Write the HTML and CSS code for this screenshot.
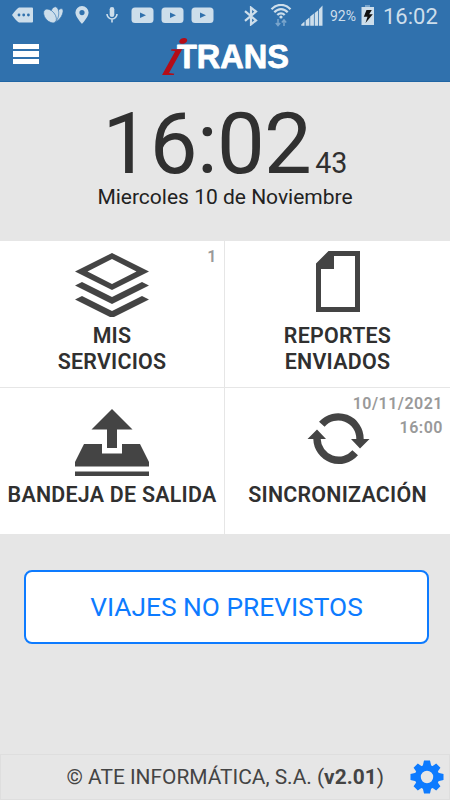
FILE: index.html
```html
<!DOCTYPE html>
<html lang="es">
<head>
    <meta charset="UTF-8">
    <meta name="viewport" content="width=device-width, initial-scale=1.0">
    <title>iTrans</title>
    <link rel="stylesheet" href="styles.css">
</head>
<body>
    <header class="top">
        <!-- Status bar -->
        <div class="status">
            <div class="status-left">
                <svg width="22" height="18" viewBox="0 0 22 18"><path d="M7 1.5H20a1 1 0 0 1 1 1V15.5a1 1 0 0 1-1 1H7Q5 16 0 9Q5 2 7 1.5Z"/><g class="hole"><circle cx="7" cy="9" r="1.4"/><circle cx="11.7" cy="9" r="1.4"/><circle cx="16.4" cy="9" r="1.4"/></g></svg>
                <svg width="22" height="18" viewBox="0 0 22 18"><ellipse class="leaf" cx="15.5" cy="9" rx="3.2" ry="7.2" transform="rotate(31 15.5 9)"/><ellipse class="leaf" cx="11.5" cy="8.5" rx="4.2" ry="7.8" transform="rotate(8 11.5 8.5)"/><ellipse class="leaf" cx="7" cy="10" rx="5" ry="8" transform="rotate(-40 7 10)"/></svg>
                <svg width="14" height="18" viewBox="0 0 14 18"><path fill-rule="evenodd" d="M7 0a6.6 6.6 0 0 1 6.6 6.6C13.6 11 7 18 7 18S.4 11 .4 6.6A6.6 6.6 0 0 1 7 0ZM7 4a2.6 2.6 0 1 0 0 5.2A2.6 2.6 0 0 0 7 4Z"/></svg>
                <svg width="12" height="18" viewBox="0 0 12 18"><rect x="3.7" y="1" width="4.6" height="10" rx="2.3"/><path class="line thin" d="M1 8a5 5 0 0 0 10 0M6 13v3.5"/></svg>
                <svg width="23" height="18" viewBox="0 0 23 18"><rect x=".5" y="1.5" width="22" height="15.5" rx="3.5"/><path class="hole" d="M9 6.4l6 2.8-6 2.8z"/></svg>
                <svg width="23" height="18" viewBox="0 0 23 18"><rect x=".5" y="1.5" width="22" height="15.5" rx="3.5"/><path class="hole" d="M9 6.4l6 2.8-6 2.8z"/></svg>
                <svg width="23" height="18" viewBox="0 0 23 18"><rect x=".5" y="1.5" width="22" height="15.5" rx="3.5"/><path class="hole" d="M9 6.4l6 2.8-6 2.8z"/></svg>
            </div>
            <div class="status-right">
                <svg class="bluetooth" width="14" height="20" viewBox="0 0 14 20"><path class="line" d="M1 5.2l11 9.2-5 4V1.6l5 4-11 9.2"/></svg>
                <svg class="wifi" width="22" height="23" viewBox="0 0 22 23"><path class="line" d="M1.5 5.3C7-.6 15-.6 20.5 5.3M4.3 8.3c4-4.3 9.4-4.3 13.4 0M7.3 11.1c2.2-2.3 5.2-2.3 7.4 0"/><circle cx="11" cy="13" r="1.6"/><path class="arrows" d="M8 15v6M5.8 19L8 21.5l2.2-2.5M14 22v-6M11.8 18.5L14 16l2.2 2.5"/></svg>
                <svg class="signal" width="22" height="21" viewBox="0 0 22 21"><path d="M.2 20.7V19.5L3.5 16.5v4.2zM4.7 15.5l3.7-3v8.2H4.7zM9.2 11.5l3.7-3v12.2H9.2zM13.7 8l3.5-2.8v15.5h-3.5zM18 4.2l3.5-3.6v20.1H18z"/></svg>
                <span class="percent">92%</span>
                <svg class="battery" width="14" height="20" viewBox="0 0 14 20"><path class="cap" d="M4 0h5v2H4z"/><rect x=".5" y="2" width="12.5" height="18"/><path class="bolt" d="M5.5 5h5.3L8.2 9.3h3.6L4.5 18l2-6.2H2.8z"/></svg>
                <span class="status-time">16:02</span>
            </div>
        </div>
        <!-- App bar -->
        <div class="app-bar">
            <div class="menu">
                <span></span>
                <span></span>
                <span></span>
            </div>
            <svg class="logo" width="132" height="44" viewBox="0 0 132 44">
                <text class="logo-i" transform="translate(-3 38.5) skewX(-18) scale(1.3 1)" x="0" y="0">i</text>
                <text class="logo-name" x="16" y="32" textLength="112" lengthAdjust="spacingAndGlyphs">TRANS</text>
            </svg>
        </div>
    </header>

    <section class="clock">
        <div class="time">16:02<span class="seconds">43</span></div>
        <div class="date">Miercoles 10 de Noviembre</div>
    </section>

    <main class="tiles">
        <div class="tile">
            <div class="badge">1</div>
            <svg class="icon" width="74" height="76" viewBox="0 0 74 76">
                <path fill-rule="evenodd" d="M37 12L74 30.5 37 49 0 30.5zM37 18L12.5 30.5 37 43 61.5 30.5z"/>
                <path d="M0 44.5l7-3.5L37 56l30-15 7 3.5L37 63zM0 58.5l7-3.5L37 70l30-15 7 3.5L37 77z"/>
            </svg>
            <div class="label">MIS<br>SERVICIOS</div>
        </div>
        <div class="tile">
            <svg class="icon" width="74" height="76" viewBox="0 0 74 76">
                <path fill-rule="evenodd" d="M27.5 10H59V71H15V22.5zM54 15H33V28H20V66H54z"/>
            </svg>
            <div class="label">REPORTES<br>ENVIADOS</div>
        </div>
        <div class="tile">
            <svg class="icon" width="74" height="88" viewBox="0 0 74 88">
                <path d="M37 21L57.5 41.5H42V60H32V41.5H16.5zM9 56H27v9.5H47V56H65l9 18v4.5H0V74zM0 83.5H74V88H0z"/>
            </svg>
            <div class="label">BANDEJA DE SALIDA</div>
        </div>
        <div class="tile">
            <div class="badge">10/11/2021<br>16:00</div>
            <svg class="icon" width="74" height="88" viewBox="0 0 74 88">
                <path class="arc" d="M20.8 36.3A21.8 21.8 0 0 1 59 51M54.2 64.8A21.8 21.8 0 0 1 16 51"/>
                <path d="M50 51H68.5L59 60.5zM6.5 51H25L16 41.5z"/>
            </svg>
            <div class="label">SINCRONIZACIÓN</div>
        </div>
    </main>

    <button class="trips">VIAJES NO PREVISTOS</button>

    <footer class="footer">
        <span class="copy">© ATE INFORMÁTICA, S.A. (<b>v2.01</b>)</span>
        <svg class="gear" width="34" height="34" viewBox="-17 -17 34 34">
            <circle class="ring" r="9.2"/>
            <path d="M-4.5-10L-3-16.5H3L4.5-10zM-4.5 10L-3 16.5H3L4.5 10zM-10-4.5L-16.5-3V3L-10 4.5zM10-4.5L16.5-3V3L10 4.5z"/>
            <path transform="rotate(45)" d="M-4-10L-3-16H3L4-10zM-4 10L-3 16H3L4 10zM-10-4L-16-3V3L-10 4zM10-4L16-3V3L10 4z"/>
        </svg>
    </footer>
</body>
</html>
```
FILE: styles.css
```css
* {
    box-sizing: border-box;
    margin: 0;
    padding: 0;
}

body {
    display: flex;
    flex-direction: column;
    height: 800px;
    font-family: Roboto, "Liberation Sans", sans-serif;
    color: #303030;
    background-color: #e6e6e6;
    overflow: hidden;
}

svg {
    display: block;
    flex: none;
}

/* Header */
.top {
    height: 82px;
    background-color: #3071ad;
    border-bottom: 1px solid #2065a4;
}

.status {
    display: flex;
    justify-content: space-between;
    height: 32px;
    padding: 0 13px 0 12px;
    color: #cddeeb;
    fill: #cddeeb;
}

.status-left {
    display: flex;
    align-items: center;
    gap: 7px;
    height: 30px;
}

.status-left svg:nth-child(2) {
    margin-left: 2px;
}

.status-left svg:nth-child(3) {
    margin-left: 3px;
}

.status-left svg:nth-child(4) {
    margin: 0 6px 0 10px;
}

.hole {
    fill: #3071ad;
}

.leaf {
    stroke: #3071ad;
    stroke-width: 0.6;
}

.line {
    fill: none;
    stroke: #cddeeb;
    stroke-width: 2.2;
}

.thin {
    stroke-width: 1.6;
}

.status-right {
    display: flex;
    align-items: center;
    height: 32px;
}

.wifi {
    margin: -2px 9px 0 12px;
}

.arrows {
    fill: none;
    stroke: #79a5cc;
    stroke-width: 1.5;
}

.signal {
    margin-right: 7px;
    margin-top: -2px;
}

.percent {
    width: 27px;
    font-size: 14px;
    margin-right: 4px;
}

.battery {
    margin-right: 8px;
    margin-top: -2px;
}

.cap {
    fill: #79a5cc;
}

.bolt {
    fill: #111;
}

.status-time {
    width: 54px;
    font-size: 22px;
}

.app-bar {
    display: flex;
    height: 49px;
    padding-left: 13px;
}

.menu {
    display: flex;
    flex-direction: column;
    gap: 2px;
    width: 26px;
    padding-top: 12px;
}

.menu span {
    height: 5.3px;
    background-color: #fff;
}

.logo {
    margin-left: 122px;
    margin-top: 4px;
    overflow: visible;
}

.logo-i {
    font-family: "Liberation Serif", serif;
    font-style: italic;
    font-size: 56px;
    fill: #b40d18;
}

.logo-name {
    font-family: "Liberation Sans", sans-serif;
    font-weight: bold;
    font-size: 32.5px;
    fill: #fff;
    stroke: #fff;
    stroke-width: 0.8;
    stroke-linejoin: round;
}

/* Clock */
.clock {
    height: 159px;
    padding-top: 12px;
    text-align: center;
    white-space: nowrap;
}

.time {
    height: 90px;
    line-height: 100px;
    font-size: 85px;
    letter-spacing: -0.6px;
}

.seconds {
    margin-left: 4px;
    font-size: 28.6px;
    letter-spacing: 0;
}

.date {
    line-height: 26px;
    font-size: 21px;
    color: #222;
}

/* Tiles */
.tiles {
    display: grid;
    grid-template-columns: 224px 225px;
    grid-template-rows: 146px 146px;
    gap: 1px;
    height: 293px;
}

.tile {
    position: relative;
    display: flex;
    flex-direction: column;
    align-items: center;
    background-color: #fff;
}

.icon {
    fill: #444;
}

.arc {
    fill: none;
    stroke: #444;
    stroke-width: 7.4;
}

.label {
    margin-top: 5.5px;
    line-height: 26px;
    font-size: 21.4px;
    font-weight: 600;
    letter-spacing: 0.25px;
    text-align: center;
    white-space: nowrap;
}

.badge {
    position: absolute;
    top: 4px;
    right: 7px;
    line-height: 24px;
    font-size: 16px;
    font-weight: 600;
    letter-spacing: 0.5px;
    color: #999;
    text-align: right;
}

/* Bottom part */
.trips {
    width: 405px;
    height: 74px;
    margin: 36px 0 0 24px;
    font-family: inherit;
    font-size: 26.3px;
    color: #0d7bff;
    background-color: #fff;
    border: 2px solid #0d7bff;
    border-radius: 8px;
}

.footer {
    display: flex;
    align-items: center;
    justify-content: flex-end;
    height: 46px;
    margin-top: auto;
    padding-right: 5px;
    border: 1px solid #dedede;
}

.copy {
    font-size: 20.9px;
    color: #444;
    white-space: nowrap;
}

.gear {
    margin-left: 26px;
    fill: #0d7bff;
}

.ring {
    fill: none;
    stroke: #0d7bff;
    stroke-width: 6;
}
```
